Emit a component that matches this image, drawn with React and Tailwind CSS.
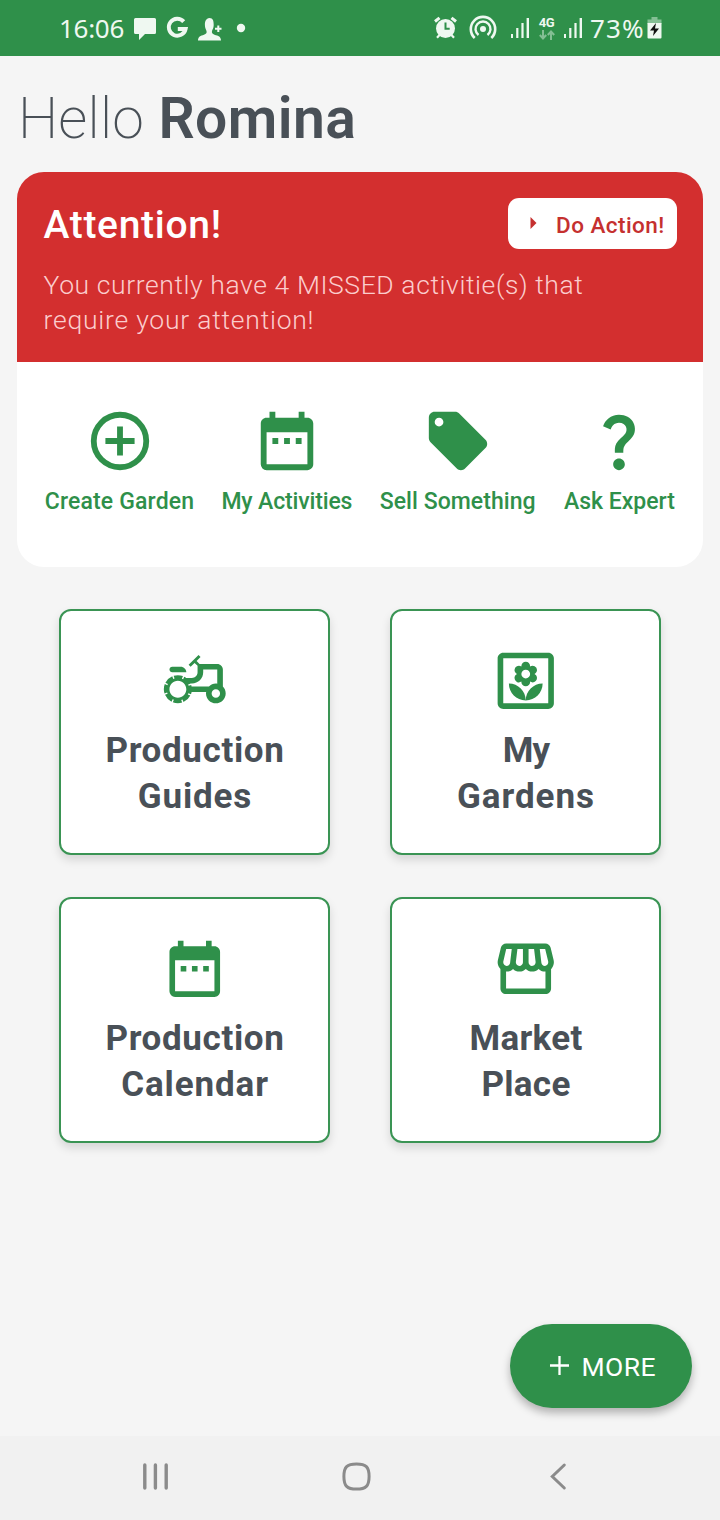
import React from 'react';
import {
  MdDateRange,
  MdLocalOffer,
  MdQuestionMark,
  MdOutlineAgriculture,
  MdOutlineYard,
  MdOutlineStorefront,
} from 'react-icons/md';

function PlusCircle({ className }) {
  return (
    <svg viewBox="0 0 24 24" className={className} fill="none" stroke="currentColor" strokeWidth="2">
      <circle cx="12" cy="12" r="9" />
      <path d="M12 7v10M7 12h10" />
    </svg>
  );
}

function SignalBars({ className }) {
  return (
    <svg viewBox="0 0 18 20" className={className} fill="currentColor">
      <rect x="0" y="16" width="2" height="4" />
      <rect x="5.2" y="10" width="2.2" height="10" />
      <rect x="10.4" y="5" width="2.2" height="15" />
      <rect x="15.6" y="0" width="2.4" height="20" />
    </svg>
  );
}

function StatusBar() {
  return (
    <header className="flex h-14 items-center bg-[#2f904a] pl-[59px] pr-[58px] text-[#eff8f1]">
      <span className="w-[74px] font-['Noto_Sans',sans-serif] text-[26px] leading-[58px] tracking-[-0.3px]">16:06</span>
      <svg className="h-14 w-[120px]" viewBox="133 0 120 56" fill="currentColor">
        <path d="M135.500 18h19q1.500 0 1.500 1.500v13q0 1.500-1.500 1.500H145l-6 6v-6h-3.500q-1.500 0-1.500-1.500v-13q0-1.500 1.500-1.500z" />
        <path d="M183.700 21.600A8.500 8.500 0 1 0 185.600 29h-7.800" fill="none" stroke="currentColor" strokeWidth="3.900" />
        <path d="M209.500 18c3.600 0 4.200 3 4.200 7 0 3-1.200 4.500-1.700 6-.4 2 .3 3 2.500 3.700 3.900 1.200 6.500 1.800 6.500 5.800H198c0-4 2.600-4.600 6-5.800 2.300-.8 3-1.700 2.500-3.700-.5-1.500-1.600-3-1.600-6 0-4 1-6.500 4.600-7z" />
        <path d="M218.300 25.500v6.500M215 28.700h6.500" stroke="currentColor" strokeWidth="2" />
        <circle cx="241" cy="28" r="4.200" />
      </svg>
      <div className="ml-auto flex h-14 items-center">
        <svg className="h-14 w-[78px]" viewBox="433 0 78 56" fill="none" stroke="currentColor">
          <circle cx="445.500" cy="28.500" r="9.500" fill="currentColor" stroke="none" />
          <path d="M435 21.500l4.500-3.700M456 21.500l-4.500-3.700" strokeWidth="3" />
          <path d="M439.500 35l-2.500 2.800M451.500 35l2.500 2.800" strokeWidth="2.200" />
          <path d="M445.500 22.500v6.200h4.200" stroke="#2f904a" strokeWidth="2" />
          <circle cx="483" cy="29" r="3" fill="currentColor" stroke="none" />
          <path d="M478.500 35a7.500 7.500 0 1 1 9 0" strokeWidth="2.400" />
          <path d="M474.700 38a12.200 12.200 0 1 1 16.600 0" strokeWidth="2.600" />
        </svg>
        <SignalBars className="h-5 w-[18px]" />
        <div className="ml-[9px] flex w-[17px] flex-col items-center">
          <span className="font-['Roboto',sans-serif] text-[13px] font-bold leading-[14px] tracking-[-0.3px]">4G</span>
          <svg className="mb-px h-[10px] w-4 text-[#84bf94]" viewBox="0 0 16 10" fill="none" stroke="currentColor" strokeWidth="2">
            <path d="M4 0v8M.8 5L4 8.500 7.200 5M12 10V2M8.800 5L12 1.500 15.200 5" />
          </svg>
        </div>
        <SignalBars className="ml-[9px] h-5 w-[18px]" />
        <span className="ml-[8px] w-[57px] font-['Noto_Sans',sans-serif] text-[26px] leading-[58px] tracking-[1.1px]">73%</span>
        <svg className="h-[22px] w-[15px]" viewBox="0 0 15 22">
          <path d="M4.500 0h6v2.500h4V7H.5V2.500h4z" fill="#84bf94" />
          <path d="M.5 6h14v14.500q0 1-1 1h-12q-1 0-1-1z" fill="currentColor" />
          <path d="M9 6l-6 7.500h4L6 19l6-7.500H8z" fill="#111" />
        </svg>
      </div>
    </header>
  );
}

function Greeting() {
  return (
    <h1 className="flex h-[115px] pl-[18px] pt-[29px] text-[57px] leading-[68px] text-[#495057]">
      <span className="w-[140.500px] font-extralight tracking-[0.200px]">Hello</span>
      <span className="font-semibold tracking-[0.400px]">Romina</span>
    </h1>
  );
}

function Alert() {
  return (
    <section className="h-[190.500px] bg-[#d32f2f] pl-[26.500px] pr-[26px] pt-[26px] text-white">
      <div className="flex h-[52px] items-center justify-between">
        <h2 className="pt-[2px] text-[39px] font-medium leading-[52px] tracking-[0.7px]">Attention!</h2>
        <button className="flex h-[51px] w-[168.500px] items-center rounded-[11px] bg-white pl-[22px] text-[#c5302f]">
          <svg className="mb-[2px] h-3 w-[7px]" viewBox="0 0 7 12" fill="currentColor">
            <path d="M.5 0L6.500 6 .5 12z" />
          </svg>
          <span className="ml-[19px] pt-[2px] text-[22.500px] font-medium leading-7 tracking-[0.45px]">Do Action!</span>
        </button>
      </div>
      <p className="mt-[17px] text-[26.500px] font-light leading-[35px] text-[#fbcdcd]">
        <span className="block whitespace-nowrap tracking-[0.59px]">You currently have 4 MISSED activitie(s) that</span>
        <span className="block whitespace-nowrap tracking-[0.77px]">require your attention!</span>
      </p>
    </section>
  );
}

const actions = [
  { label: 'Create Garden', Icon: PlusCircle, box: 'w-[150px] tracking-[0.15px]' },
  { label: 'My Activities', Icon: MdDateRange, box: 'w-[130px] tracking-[-0.15px]' },
  { label: 'Sell Something', Icon: MdLocalOffer, box: 'w-[157px] tracking-[0.05px]' },
  { label: 'Ask Expert', Icon: MdQuestionMark, box: 'w-[112px] tracking-[0px]' },
];

function QuickActions() {
  return (
    <nav className="flex h-[205px] justify-between bg-white pl-[27.500px] pr-[27px] pt-[44px] text-[#2f904a]">
      {actions.map(({ label, Icon, box }) => (
        <a key={label} className={`flex flex-col items-center text-[23px] font-medium leading-[30px] ${box}`}>
          <Icon className="size-[70px] shrink-0" />
          <span className="mt-[11px] whitespace-nowrap">{label}</span>
        </a>
      ))}
    </nav>
  );
}

const tiles = [
  { Icon: MdOutlineAgriculture, top: 'Production', bottom: 'Guides', t: 'tracking-[0.65px]', b: 'tracking-[0.85px]' },
  { Icon: MdOutlineYard, top: 'My', bottom: 'Gardens', t: 'tracking-[-1px]', b: 'tracking-[0.95px]' },
  { Icon: MdDateRange, top: 'Production', bottom: 'Calendar', t: 'tracking-[0.65px]', b: 'tracking-[0.88px]' },
  { Icon: MdOutlineStorefront, top: 'Market', bottom: 'Place', t: 'tracking-[0.3px]', b: 'tracking-[0.3px]' },
];

function Tiles() {
  return (
    <div className="mt-[42px] grid grid-cols-[271.500px_271.500px] justify-center gap-x-[59.500px] gap-y-[42px]">
      {tiles.map(({ Icon, top, bottom, t, b }) => (
        <a
          key={top + bottom}
          className="flex h-[246px] flex-col items-center rounded-[12px] border-2 border-[#3a9454] bg-white pt-[35.500px] text-[35px] font-bold leading-[46px] text-[#495057] shadow-[0_5px_10px_rgba(0,0,0,0.13)]"
        >
          <Icon className="ml-px size-[67.500px] shrink-0 text-[#2f904a]" />
          <span className={`ml-px mt-[14px] ${t}`}>{top}</span>
          <span className={`ml-px ${b}`}>{bottom}</span>
        </a>
      ))}
    </div>
  );
}

function MoreButton() {
  return (
    <button className="mb-7 ml-auto mr-7 mt-auto flex h-[84px] w-[182.500px] items-center rounded-full bg-[#2f904a] pl-[40px] text-white shadow-[0_5px_8px_rgba(0,0,0,0.28)]">
      <svg className="mb-px size-[19px]" viewBox="0 0 19 19" fill="none" stroke="currentColor" strokeWidth="2.300">
        <path d="M9.500 0v19M0 9.500h19" />
      </svg>
      <span className="ml-[13px] pt-[2px] text-[26.500px] font-normal leading-8 tracking-[0.4px]">MORE</span>
    </button>
  );
}

function NavBar() {
  return (
    <footer className="h-[84px] bg-[#f1f1f1] text-[#8b8b8b]">
      <svg className="h-[84px] w-full" viewBox="0 1436 720 84" fill="none" stroke="currentColor">
        <path d="M144.800 1465v23M155.400 1465v23M166.200 1465v23" strokeWidth="3.400" strokeLinecap="round" />
        <path d="M356.500 1463.900c9.500 0 12.600 3.100 12.600 12.600s-3.100 12.600-12.600 12.600-12.600-3.100-12.600-12.600 3.100-12.600 12.600-12.600z" strokeWidth="3" />
        <path d="M564.300 1465l-12 11.500 12 11.500" strokeWidth="3" strokeLinecap="round" />
      </svg>
    </footer>
  );
}

export default function App() {
  return (
    <div className="flex h-[1520px] w-[720px] flex-col overflow-hidden bg-[#f5f5f5] font-['Roboto',sans-serif]">
      <StatusBar />
      <Greeting />
      <main className="ml-[17px] mr-[17.500px] mt-[0.500px] shrink-0 overflow-hidden rounded-[27px]">
        <Alert />
        <QuickActions />
      </main>
      <Tiles />
      <MoreButton />
      <NavBar />
    </div>
  );
}
